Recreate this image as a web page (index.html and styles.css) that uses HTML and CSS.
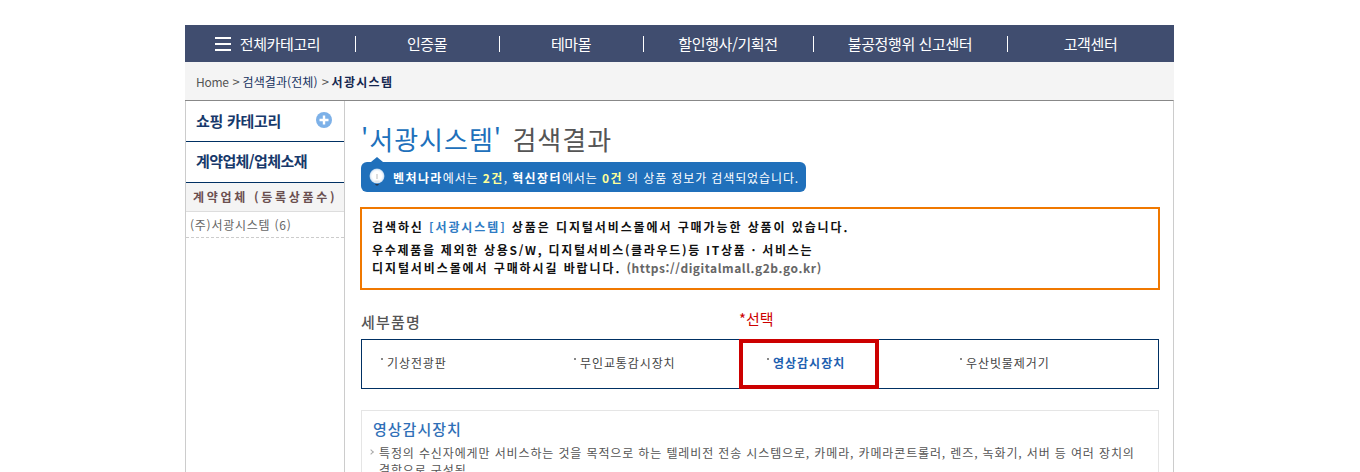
FILE: index.html
```html
<!DOCTYPE html>
<html lang="ko">
<head>
<meta charset="utf-8">
<title>서광시스템 검색결과</title>
<link rel="stylesheet" href="styles.css">
</head>
<body>
<div class="wrap">
  <nav class="gnb">
    <a class="gnb-item gnb-all"><svg class="burger" width="16" height="14" viewBox="0 0 16 14"><path d="M0 1h16M0 7h16M0 13h16" stroke="#fff" stroke-width="2"/></svg>전체카테고리</a>
    <a class="gnb-item">인증몰</a>
    <a class="gnb-item">테마몰</a>
    <a class="gnb-item">할인행사/기획전</a>
    <a class="gnb-item">불공정행위 신고센터</a>
    <a class="gnb-item">고객센터</a>
  </nav>
  <div class="crumb">
    <span>Home</span><span class="arrow">&gt;</span><span class="crumb-link">검색결과(전체)</span><span class="arrow">&gt;</span><strong class="crumb-now">서광시스템</strong>
  </div>
  <div class="body-row">
    <aside class="side">
      <div class="side-head">
        <span>쇼핑 카테고리</span>
        <svg width="16" height="16" viewBox="0 0 16 16"><circle cx="8" cy="8" r="8" fill="#7db1e8"/><path d="M8 3.5v9M3.5 8h9" stroke="#fff" stroke-width="2.4"/></svg>
      </div>
      <div class="side-head side-head-b"><span class="tight">계약업체/업체소재</span></div>
      <div class="side-sub">계약업체 (등록상품수)</div>
      <div class="side-item">(주)서광시스템 (6)</div>
    </aside>
    <main class="main">
      <h1 class="title"><em>'서광시스템'</em> 검색결과</h1>
      <div class="bubble">
        <svg class="bulb" width="16" height="20" viewBox="0 0 16 20">
          <defs><radialGradient id="glow"><stop offset="0.6" stop-color="#fff"/><stop offset="0.85" stop-color="#e6eff8"/><stop offset="1" stop-color="#a5c6e6"/></radialGradient></defs>
          <circle cx="8" cy="9" r="7.5" fill="url(#glow)"/>
          <path d="M8 7v5" stroke="#cfcfcf" stroke-width="1.4"/>
          <path d="M5.5 13.5h5v2h-5z" fill="#dfe4ea"/>
          <path d="M6 17h4l-1 1.5H7z" fill="#26364f"/>
        </svg>
        <p><b>벤처나라</b>에서는 <b class="hl">2건</b>, <b>혁신장터</b>에서는 <b class="hl">0건</b> 의 상품 정보가 검색되었습니다.</p>
      </div>
      <div class="notice">
        <p class="first">검색하신 <span class="blue">[서광시스템]</span> 상품은 디지털서비스몰에서 구매가능한 상품이 있습니다.</p>
        <p class="second">우수제품을 제외한 상용S/W, 디지털서비스(클라우드)등 IT상품 · 서비스는</p>
        <p>디지털서비스몰에서 구매하시길 바랍니다. <span class="url">(https://digitalmall.g2b.go.kr)</span></p>
      </div>
      <div class="sec-head"><h2>세부품명</h2><span class="pick">*선택</span></div>
      <ul class="tabs">
        <li>기상전광판</li>
        <li>무인교통감시장치</li>
        <li class="on">영상감시장치</li>
        <li>우산빗물제거기</li>
      </ul>
      <section class="desc">
        <h3>영상감시장치</h3>
        <p>특정의 수신자에게만 서비스하는 것을 목적으로 하는 텔레비전 전송 시스템으로, 카메라, 카메라콘트롤러, 렌즈, 녹화기, 서버 등 여러 장치의 결합으로 구성됨</p>
      </section>
    </main>
  </div>
</div>
</body>
</html>
```
FILE: styles.css
```css
*, *::before, *::after { box-sizing: border-box; }
html, body { margin: 0; padding: 0; height: 472px; overflow: hidden; background: #fff; }
body { font-family: "Noto Sans CJK KR", "Liberation Sans", sans-serif; font-size: 12px; color: #444; padding-top: 25px; }
p, h1, h2, h3, ul { margin: 0; padding: 0; }
.wrap { width: 989px; margin-left: 185px; }

.gnb { display: grid; grid-template-columns: 170px 144px 144px 170px 194px 167px; height: 37px; background: #404d6f; align-items: center; }
.gnb-item { display: flex; align-items: center; justify-content: center; height: 16px; padding-right: 1px; color: #fff; font-size: 15px; letter-spacing: -0.4px; line-height: 16px; border-left: 1px solid #fff; }
.gnb-all { border-left: 0; padding-right: 5px; }
.burger { margin-right: 9px; }

.crumb { display: flex; align-items: center; height: 38px; padding-left: 11px; background: #f4f4f4; font-size: 12px; color: #555; letter-spacing: -0.3px; }
.arrow { margin: 0 3px 0 4px; font-size: 13px; }
.crumb-link { color: #14315f; letter-spacing: 0.1px; }
.crumb-now { color: #14264f; font-weight: 700; letter-spacing: 1.3px; }

.body-row { display: flex; border-top: 1px solid #888; border-right: 1px solid #ccc; min-height: 372px; }
.side { width: 160px; border-left: 1px solid #ccc; border-right: 1px solid #ccc; flex: none; }
.side-head { display: flex; align-items: center; justify-content: space-between; height: 41px; padding: 0 12px 2px 10px; border-bottom: 1px solid #003063; color: #17396b; font-size: 15px; font-weight: 700; letter-spacing: -0.3px; }
.side-head-b { padding-bottom: 4px; }
.tight { letter-spacing: -0.6px; }
.side-sub { height: 29px; line-height: 28px; padding-left: 7px; background: #f4f4f4; border-bottom: 1px solid #ddd; font-size: 12px; font-weight: 700; color: #6b4f4f; letter-spacing: 2.7px; white-space: nowrap; }
.side-item { height: 26px; line-height: 25px; padding-left: 4px; border-bottom: 1px dashed #ccc; font-size: 12px; color: #666; letter-spacing: 0.75px; }

.main { flex: 1; padding: 0 15px 0 16px; }
.title { margin-top: 20px; height: 36px; font-size: 26px; line-height: 36px; font-weight: 400; color: #555; letter-spacing: 1px; word-spacing: 2px; }
.title em { font-style: normal; color: #2070bb; }
.bubble { position: relative; display: flex; align-items: center; width: 445px; height: 30px; margin-top: 5px; padding-left: 8px; background: #2070bb; border-radius: 6px; color: #fff; font-size: 12px; letter-spacing: 0.88px; white-space: nowrap; }
.bubble::before { content: ""; position: absolute; left: 10px; top: -5px; border: 6px solid transparent; border-top: 0; border-bottom: 5px solid #2070bb; }
.bulb { margin-right: 8px; flex: none; }
.bubble b { font-weight: 700; letter-spacing: 1.4px; }
.bubble .hl { color: #ffff99; }

.notice { width: 800px; height: 83px; margin: 15px 0 0 -1px; padding: 9px 10px; border: 2px solid #f07800; font-size: 12px; font-weight: 700; color: #111; line-height: 18px; letter-spacing: 1.9px; white-space: nowrap; }
.notice .first { margin-bottom: 5px; }
.notice .second { letter-spacing: 1.7px; }
.notice .blue { color: #2f7cc4; }
.notice .url { color: #666; letter-spacing: 0.55px; }

.sec-head { position: relative; display: flex; align-items: flex-end; height: 49px; padding-bottom: 7px; }
.sec-head h2 { font-size: 15px; font-weight: 500; color: #555; line-height: 20px; letter-spacing: 1.2px; }
.pick { position: absolute; left: 378px; top: 18px; font-size: 15px; color: #c00; line-height: 22px; }

.tabs { display: grid; grid-template-columns: repeat(4, 193px); width: 798px; height: 50px; padding-left: 19px; border: 1px solid #003063; list-style: none; align-items: center; margin-top: 0; color: #444; }
.tabs li { position: relative; top: -1px; padding-left: 6px; font-size: 12px; line-height: 16px; letter-spacing: 0.9px; }
.tabs li::before { content: ""; position: absolute; left: 0; top: 3px; width: 2px; height: 2px; background: #888; }
.tabs .on { color: #2060b0; font-weight: 700; letter-spacing: 1px; }
.tabs .on::after { content: ""; position: absolute; left: -28px; top: -16px; width: 140px; height: 50px; border: 4px solid #c00; }

.desc { width: 798px; margin-top: 21px; padding: 8px 11px 10px; border: 1px solid #e5e5e5; }
.desc h3 { font-size: 15px; font-weight: 500; color: #2f6fb7; line-height: 20px; letter-spacing: 1px; }
.desc p { position: relative; margin-top: 5px; padding-left: 6px; font-size: 12px; line-height: 17px; color: #555; letter-spacing: 0.87px; }
.desc p::before { content: ""; position: absolute; left: -4px; top: 6px; width: 4px; height: 4px; border-top: 1px solid #aaa; border-right: 1px solid #aaa; transform: rotate(45deg); }
```
